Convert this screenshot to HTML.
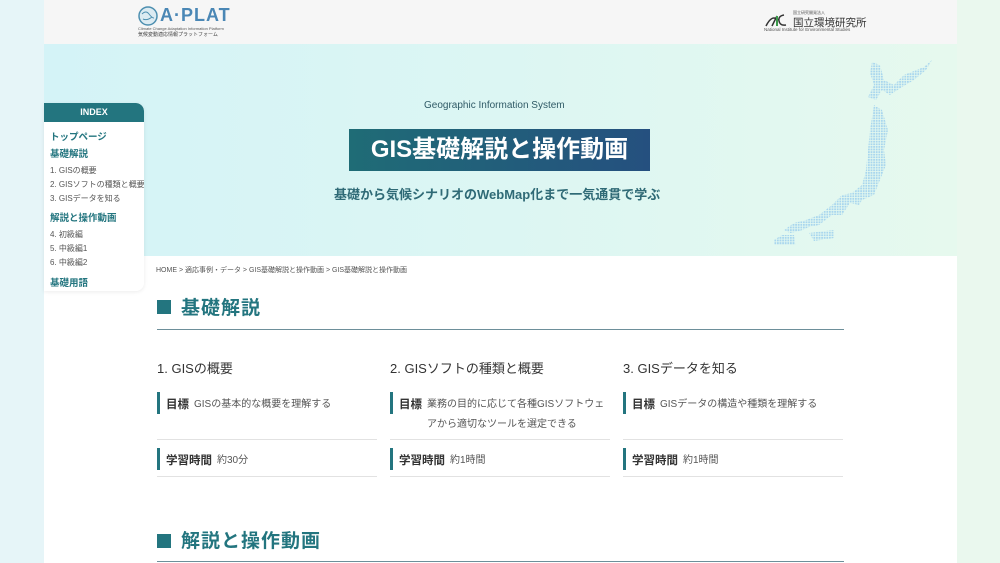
<!DOCTYPE html>
<html><head><meta charset="utf-8">
<style>
*{margin:0;padding:0;box-sizing:border-box}
body{width:1000px;height:563px;overflow:hidden;font-family:"Liberation Sans","Noto Sans CJK JP",sans-serif;color:#333;background:linear-gradient(90deg,#e6f5f8 0,#e6f5f8 44px,#fff 44px,#fff 957px,#eaf8ee 957px);position:relative}
.hdr{position:absolute;left:44px;top:0;width:913px;height:44px;background:#f6f6f6}
.hero{position:absolute;left:44px;top:44px;width:913px;height:212px;background:linear-gradient(90deg,#d4f3f7,#dcf6f3 50%,#e6f9ee)}
.main{position:absolute;left:44px;top:256px;width:913px;height:307px;background:#fff}
.a{position:absolute;white-space:nowrap}
.idx{position:absolute;left:44px;top:103px;width:100px;height:188px;background:#fff;border-radius:0 8px 8px 0;box-shadow:0 1px 4px rgba(0,0,0,.08);overflow:hidden}
.idx .t{background:#23757f;color:#fff;font-weight:bold;font-size:9px;text-align:center;height:19px;line-height:19px;border-radius:0 8px 0 0}
.idx div.i{position:absolute;left:6px;font-size:8px;color:#555;white-space:nowrap}
.idx div.h{position:absolute;left:6px;font-size:9.5px;color:#23757f;font-weight:bold;white-space:nowrap}
.sec{position:absolute;left:157px;width:687px;border-bottom:1.5px solid #6d8f9a}
.sec span.sq{position:absolute;left:0;width:14px;height:14px;background:#23757f}
.sec b{position:absolute;left:24px;font-size:19px;color:#23757f;letter-spacing:1px}
.col{position:absolute;width:220px}
.col .ti{position:absolute;top:0;font-size:13px;color:#333}
.col .row{position:absolute;left:0;width:220px;border-bottom:1px solid #e2e2e2}
.col .bar{position:absolute;left:0;top:0;width:3px;height:22px;background:#23757f}
.col .k{position:absolute;left:9px;top:4px;font-size:11.5px;font-weight:bold;color:#333}
.col .v{position:absolute;font-size:10px;color:#555;line-height:20px}
</style></head><body>
<div class="hdr"></div>
<svg class="a" style="left:138px;top:6px" width="20" height="20"><circle cx="10" cy="10" r="9" fill="#dcebf2" stroke="#4d8fb0" stroke-width="1.5"/><path d="M4 8q4-4 7 0t5 4M5 13q4 2 9-2" stroke="#4d8fb0" fill="none"/></svg>
<div class="a" style="left:160px;top:5px;font-size:18px;font-weight:bold;color:#4a87b5;letter-spacing:1px">A·PLAT</div>
<div class="a" style="left:138px;top:26px;font-size:4px;color:#555">Climate Change Adaptation Information Platform</div>
<div class="a" style="left:138px;top:31px;font-size:5px;color:#444">気候変動適応情報プラットフォーム</div>
<svg class="a" style="left:764px;top:12px" width="28" height="16"><path d="M2 14q6-12 12-6M8 14l5-10M20 3q-6 1-5 6t7 4" stroke="#333" fill="none" stroke-width="1.5"/><rect x="12" y="4" width="2" height="10" fill="#3a9a4a"/></svg>
<div class="a" style="left:793px;top:10px;font-size:4px;color:#555">国立研究開発法人</div>
<div class="a" style="left:793px;top:15px;font-size:10.5px;color:#333">国立環境研究所</div>
<div class="a" style="left:764px;top:27px;font-size:4.5px;color:#555">National Institute for Environmental Studies</div>
<div class="hero"></div>
<svg class="a" style="left:764px;top:55px" width="172" height="190">
<defs><pattern id="d" width="2.6" height="2.6" patternUnits="userSpaceOnUse"><rect width="1.8" height="1.8" fill="#a8d6ee"/></pattern></defs>
<g fill="url(#d)">
<path d="M108 7L116 10 120 25 130 30 140 20 160 12 168 5 162 15 150 25 138 32 126 40 118 35 112 45 104 42 110 30 106 18Z"/>
<path d="M110 50L118 55 124 75 120 95 122 110 116 125 110 140 98 145 95 150 86 148 78 160 68 160 55 170 45 172 36 176 26 178 20 175 30 168 42 165 55 160 68 150 78 140 88 138 98 130 102 115 104 95 106 75Z"/>
<path d="M45 178L70 175 70 183 50 186Z"/>
<path d="M18 180L30 180 32 195 26 205 18 210 12 200 10 185Z"/>
</g></svg>
<div class="a" style="left:424px;top:100px;font-size:10px;color:#2f5a66">Geographic Information System</div>
<div class="a" style="left:349px;top:129px;width:301px;height:42px;background:linear-gradient(90deg,#1f6c76,#25507f);color:#fff;font-size:24px;font-weight:bold;text-align:center;line-height:42px">GIS基礎解説と操作動画</div>
<div class="a" style="left:334px;top:184px;font-size:13px;font-weight:bold;color:#2f6a76">基礎から気候シナリオのWebMap化まで一気通貫で学ぶ</div>
<div class="main"></div>
<div class="idx"><div class="t">INDEX</div>
<div class="h" style="top:26px">トップページ</div>
<div class="h" style="top:43px">基礎解説</div>
<div class="i" style="top:62px">1. GISの概要</div>
<div class="i" style="top:76px">2. GISソフトの種類と概要</div>
<div class="i" style="top:90px">3. GISデータを知る</div>
<div class="h" style="top:107px">解説と操作動画</div>
<div class="i" style="top:126px">4. 初級編</div>
<div class="i" style="top:140px">5. 中級編1</div>
<div class="i" style="top:154px">6. 中級編2</div>
<div class="h" style="top:172px">基礎用語</div>
</div>
<div class="a" style="left:156px;top:265px;font-size:7px;color:#555">HOME &gt; 適応事例・データ &gt; GIS基礎解説と操作動画 &gt; GIS基礎解説と操作動画</div>
<div class="sec" style="top:290px;height:40px"><span class="sq" style="top:10px"></span><b style="top:3px">基礎解説</b></div>
<div class="col" style="left:157px;top:358px"><div class="ti">1. GISの概要</div>
<div class="row" style="top:34px;height:48px"><div class="bar"></div><div class="k">目標</div><div class="v" style="left:37px;top:3px">GISの基本的な概要を理解する</div></div>
<div class="row" style="top:90px;height:29px"><div class="bar"></div><div class="k">学習時間</div><div class="v" style="left:60px;top:3px">約30分</div></div></div>
<div class="col" style="left:390px;top:358px"><div class="ti">2. GISソフトの種類と概要</div>
<div class="row" style="top:34px;height:48px"><div class="bar"></div><div class="k">目標</div><div class="v" style="left:37px;top:3px;white-space:normal;width:180px">業務の目的に応じて各種GISソフトウェアから適切なツールを選定できる</div></div>
<div class="row" style="top:90px;height:29px"><div class="bar"></div><div class="k">学習時間</div><div class="v" style="left:60px;top:3px">約1時間</div></div></div>
<div class="col" style="left:623px;top:358px"><div class="ti">3. GISデータを知る</div>
<div class="row" style="top:34px;height:48px"><div class="bar"></div><div class="k">目標</div><div class="v" style="left:37px;top:3px">GISデータの構造や種類を理解する</div></div>
<div class="row" style="top:90px;height:29px"><div class="bar"></div><div class="k">学習時間</div><div class="v" style="left:60px;top:3px">約1時間</div></div></div>
<div class="sec" style="top:524px;height:38px"><span class="sq" style="top:10px"></span><b style="top:2px">解説と操作動画</b></div>
</body></html>
